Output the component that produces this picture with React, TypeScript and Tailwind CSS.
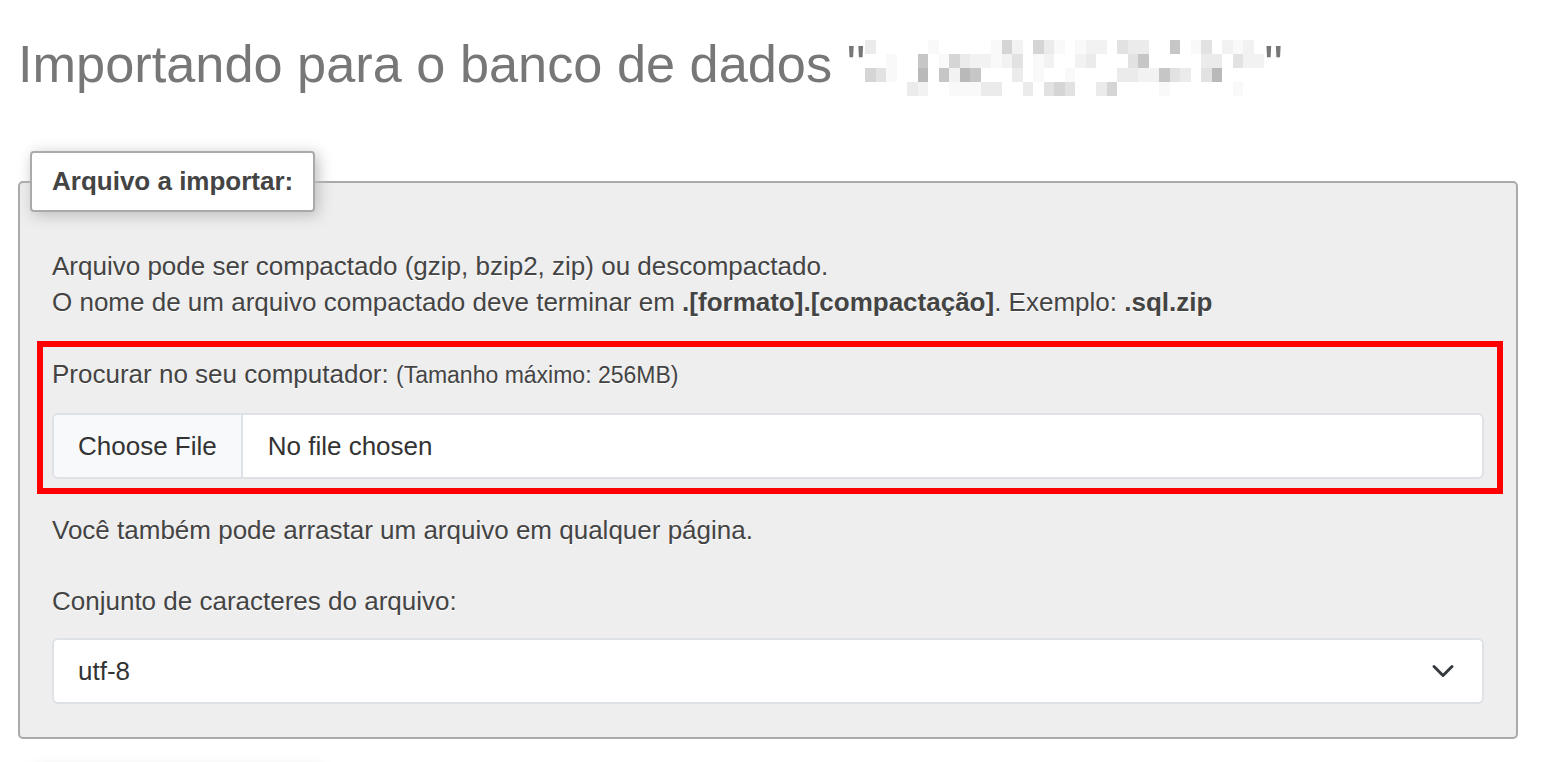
import React from "react";

const palette: Record<string, string> = {
  ".": "#ffffff",
  a: "#f9f9f9",
  b: "#f2f2f2",
  c: "#ebebeb",
  d: "#e2e2e2",
  e: "#d5d5d5",
  f: "#c6c6c6",
  g: "#b9b9b9",
};

const rows = [
  "c.....a.....aeb.eca.abb.dcc..f.ad.bab.",
  "..a..f.aecbbabd.ab..bc...df.....cc.dbb",
  "eda..g.fbgf...c.a..a....ccbbfdc.dg....",
  "....cb..aaacc..c.ded..ce....a......a..",
];

function Mosaic() {
  return (
    <div className="mt-[8px] grid grid-cols-[repeat(38,10.5px)] grid-rows-[repeat(4,14px)]">
      {rows.flatMap((r, i) =>
        r.split("").map((ch, j) => (
          <div key={`${i}-${j}`} style={{ backgroundColor: palette[ch] }} />
        ))
      )}
    </div>
  );
}

function Chevron() {
  return (
    <svg width="24" height="24" viewBox="0 0 16 16" fill="none">
      <path
        d="m2 5 6 6 6-6"
        stroke="#343a40"
        strokeWidth="2"
        strokeLinecap="round"
        strokeLinejoin="round"
      />
    </svg>
  );
}

export default function App() {
  return (
    <div className="min-h-screen bg-white font-['Liberation_Sans',Arial,sans-serif] text-[#444]">
      <h2 className="flex items-start pl-[18px] pt-[32px] text-[52.3px] font-normal leading-[64px] text-[#777]">
        <span className="whitespace-pre">Importando para o banco de dados "</span>
        <Mosaic />
        <span>"</span>
      </h2>

      <div className="ml-[18px] mt-[85px] w-[1500px] rounded-[5px] border-2 border-[#aaa] bg-[#eee] px-[32px] pb-[33px] text-[26px] [text-shadow:0_1px_0_#fff]">
        <div className="-ml-[22px] -mt-[32px] flex h-[61px] w-fit items-center rounded-[4px] border-2 border-[#aaa] bg-white px-[20px] font-bold shadow-[3px_3px_15px_#bbb]">
          Arquivo a importar:
        </div>

        <div className="mt-[36px] leading-[36px]">
          <div>Arquivo pode ser compactado (gzip, bzip2, zip) ou descompactado.</div>
          <div>
            O nome de um arquivo compactado deve terminar em <b>.[formato].[compactação]</b>. Exemplo:{" "}
            <b>.sql.zip</b>
          </div>
        </div>

        <div className="relative mt-[36px]">
          <div className="leading-[36px]">
            Procurar no seu computador: <span className="text-[23px]">(Tamanho máximo: 256MB)</span>
          </div>
          <div className="mt-[20px] flex h-[66px] overflow-hidden rounded-[6px] border-2 border-[#dee2e6] bg-white text-[#333] [text-shadow:none]">
            <div className="flex items-center border-r-2 border-[#dee2e6] bg-[#f8f9fa] px-[24px]">
              Choose File
            </div>
            <div className="flex items-center pl-[25px]">No file chosen</div>
          </div>
          <div className="pointer-events-none absolute -bottom-[15px] -left-[15px] -right-[19px] -top-[15px] border-[6px] border-[#ff0000]" />
        </div>

        <div className="mt-[33px] leading-[36px]">Você também pode arrastar um arquivo em qualquer página.</div>

        <div className="mt-[35px] leading-[36px]">Conjunto de caracteres do arquivo:</div>

        <div className="mt-[19px] flex h-[66px] items-center justify-between rounded-[6px] border-2 border-[#dee2e6] bg-white pl-[24px] pr-[27px] text-[#333] [text-shadow:none]">
          <span>utf-8</span>
          <Chevron />
        </div>
      </div>

      <div className="ml-[18px] mt-[60px] w-[1500px] rounded-[5px] border-2 border-[#aaa] bg-[#eee] px-[32px] pb-[31px]">
        <div className="-ml-[22px] -mt-[32px] h-[61px] w-[290px] rounded-[4px] border-2 border-[#aaa] bg-white shadow-[3px_3px_15px_#bbb]" />
        <div className="h-[100px]" />
      </div>
    </div>
  );
}
